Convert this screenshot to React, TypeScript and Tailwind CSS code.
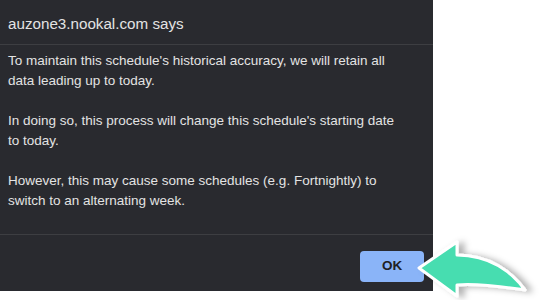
export default function App() {
  const paragraphs = [
    "To maintain this schedule's historical accuracy, we will retain all\ndata leading up to today.",
    "In doing so, this process will change this schedule's starting date\nto today.",
    "However, this may cause some schedules (e.g. Fortnightly) to\nswitch to an alternating week.",
  ];

  return (
    <div
      className="relative h-[300px] w-[541px] overflow-hidden bg-white"
      style={{ fontFamily: '"Liberation Sans", Arial, sans-serif' }}
    >
      <div className="flex h-[291px] w-[433px] flex-col bg-[#292a2f] text-[#e3e3e3]">
        <div className="flex h-[45px] shrink-0 items-center border-b border-[#3d3e42] px-2 pt-[5px] text-[15.2px]">
          auzone3.nookal.com says
        </div>
        <div className="h-[190px] shrink-0 whitespace-pre-line border-b border-[#3d3e42] px-2 pt-[6px] text-[13.5px] leading-[20px]">
          {paragraphs.join("\n\n")}
        </div>
        <div className="flex flex-1 items-start justify-end pr-[9px] pt-[16px]">
          <button
            type="button"
            className="h-[31px] w-[64px] rounded-[4px] bg-[#8ab4f8] text-[13.5px] font-bold text-[#202124]"
          >
            OK
          </button>
        </div>
      </div>

      {/* callout arrow pointing at the OK button */}
      <svg
        className="pointer-events-none absolute inset-0 h-[300px] w-[541px]"
        viewBox="0 0 541 300"
      >
        <defs>
          <filter id="shadow" x="-20%" y="-20%" width="150%" height="150%">
            <feDropShadow dx="6" dy="1" stdDeviation="3" floodColor="#000" floodOpacity="0.3" />
          </filter>
        </defs>
        <path
          d="M419 268 L457 242 L457 255 C490 255 512 272 525 290 C510 288 480 283 457 285 L457 296 Z"
          fill="#47ddb0"
          stroke="#fff"
          strokeWidth="3"
          strokeLinejoin="round"
          filter="url(#shadow)"
        />
      </svg>
    </div>
  );
}
